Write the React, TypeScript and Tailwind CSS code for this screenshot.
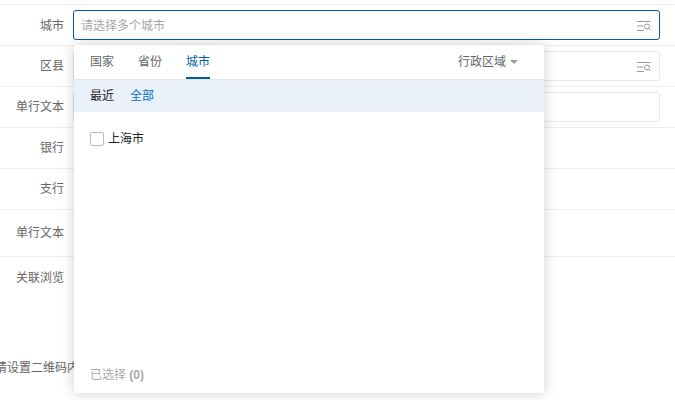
const font = "font-['Liberation_Sans','Noto_Sans_CJK_SC',sans-serif]";

function SearchListIcon() {
  return (
    <svg width="14" height="12" viewBox="0 0 14 12" fill="none" className="text-[#999]">
      <path d="M0 1.500h13.500M0 6h6M0 10.500h7" stroke="currentColor" strokeWidth="1" />
      <circle cx="10" cy="6.500" r="2.500" stroke="currentColor" strokeWidth="1" />
      <path d="M12 8.500l1.500 1.500" stroke="currentColor" strokeWidth="1" />
    </svg>
  );
}

function Row({
  label,
  height = "h-[41px]",
  labelClass = "",
  children,
}: {
  label: string;
  height?: string;
  labelClass?: string;
  children?: React.ReactNode;
}) {
  return (
    <div className={`flex items-center border-b border-[#eeeeee] ${height}`}>
      <div className={`w-[64px] shrink-0 text-right text-[12px] text-[#666] ${labelClass}`}>{label}</div>
      {children}
    </div>
  );
}

export default function App() {
  return (
    <div className={`relative h-[400px] w-[675px] overflow-hidden bg-white ${font}`}>
      <div className="h-[5px] border-b border-[#eeeeee]" />

      <Row label="城市" labelClass="pt-[1px]">
        <div className="ml-[9px] flex h-[30px] w-[587px] items-center justify-between rounded-[3px] border border-[#015f9f] pl-[7px] pr-[8px]">
          <span className="pt-[1px] text-[12px] text-[#a6a6a6]">请选择多个城市</span>
          <span className="mt-[2px]"><SearchListIcon /></span>
        </div>
      </Row>
      <Row label="区县">
        <div className="ml-[9px] flex h-[30px] w-[587px] items-center justify-end rounded-[3px] border border-[#e8e8e8] pr-[8px]">
          <span className="mt-[2px]"><SearchListIcon /></span>
        </div>
      </Row>
      <Row label="单行文本">
        <div className="ml-[9px] h-[30px] w-[587px] rounded-[3px] border border-[#e8e8e8]" />
      </Row>
      <Row label="银行" />
      <Row label="支行" />
      <Row label="单行文本" height="h-[47px]" />

      <div className="pt-[12px] text-[12px] text-[#666]">
        <div className="w-[64px] text-right">关联浏览</div>
        <div className="ml-[-5px] mt-[72px] whitespace-nowrap">请设置二维码内容</div>
      </div>

      {/* dropdown panel */}
      <div className="absolute left-[74px] top-[45px] flex h-[348px] w-[470px] flex-col rounded-[2px] bg-white shadow-[0_0_14px_rgba(0,0,0,0.2)]">
        <div className="flex h-[35px] items-stretch justify-between border-b border-[#e4e4e4] pl-[16px] pr-[26px] text-[12px] text-[#666]">
          <div className="flex gap-[24px]">
            <div className="flex items-center">国家</div>
            <div className="flex items-center">省份</div>
            <div className="flex items-center border-b-2 border-[#015f9f] pt-[2px] text-[#015f9f]">城市</div>
          </div>
          <div className="flex items-center gap-[4px]">
            行政区域
            <span className="h-0 w-0 border-x-[4px] border-t-[4px] border-x-transparent border-t-[#999]" />
          </div>
        </div>
        <div className="flex h-[32px] items-center gap-[16px] bg-[#eaf1fb] px-[16px] text-[12px]">
          <span className="text-[#222]">最近</span>
          <span className="text-[#0270b8]">全部</span>
        </div>
        <div className="flex items-center gap-[4px] px-[16px] pt-[18px] text-[12px] text-[#222]">
          <span className="h-[14px] w-[14px] rounded-[2px] border border-[#bbb]" />
          上海市
        </div>
        <div className="mt-auto px-[16px] pb-[9px] text-[12px] text-[#aaa]">
          已选择 <span className="font-semibold">(0)</span>
        </div>
      </div>
    </div>
  );
}
